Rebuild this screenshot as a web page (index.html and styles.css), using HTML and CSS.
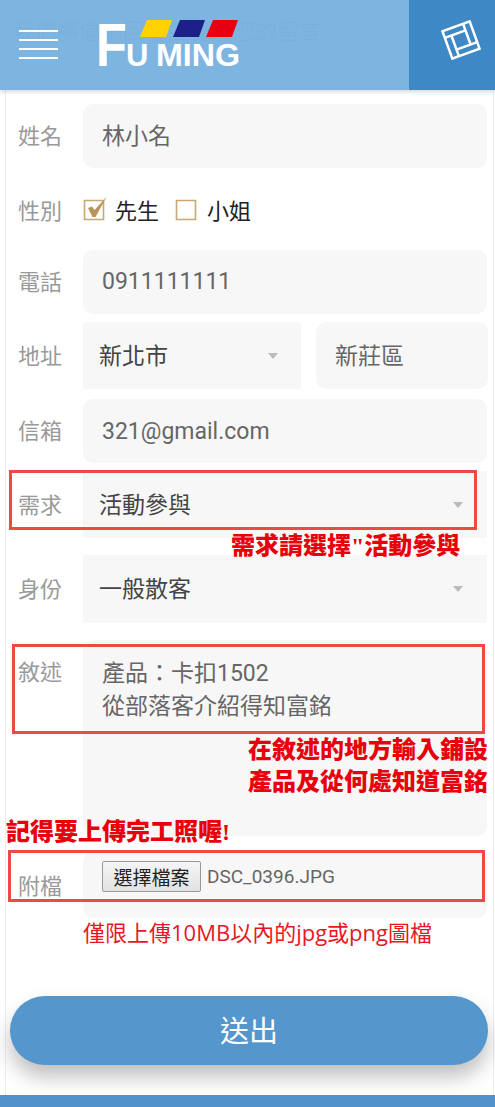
FILE: index.html
```html
<!DOCTYPE html>
<html lang="zh-Hant">
<head>
    <meta charset="UTF-8">
    <meta name="viewport" content="width=device-width, initial-scale=1.0">
    <title>聯絡我們</title>
    <link rel="stylesheet" href="styles.css">
</head>
<body>
    <header class="top-bar">
        <button class="menu-btn" type="button" aria-label="選單">
            <span></span><span></span><span></span><span></span>
        </button>
        <svg class="logo" width="160" height="50" viewBox="0 0 160 50">
            <text x="6" y="47" class="logo-f" textLength="31" lengthAdjust="spacingAndGlyphs">F</text>
            <text x="36" y="47" class="logo-u">U</text>
            <text x="66" y="47" class="logo-ming" textLength="84" lengthAdjust="spacingAndGlyphs">MING</text>
            <polygon points="57,1 82,1 76,18 50,18" fill="#ffd200"/>
            <polygon points="90,1 115,1 109,18 83,18" fill="#1c2088"/>
            <polygon points="123,1 148,1 142,18 116,18" fill="#e60012"/>
        </svg>
        <a class="side-btn" href="#" aria-label="產品">
            <svg width="40" height="40" viewBox="0 0 40 40" fill="none" stroke="#fff" stroke-width="2.5">
                <g transform="rotate(-20 20 20)">
                    <rect x="5.5" y="5.5" width="29" height="29"/>
                    <path d="M5.5 12.5H27.5M27.5 5.5V27.5M34.5 27.5H12.5M12.5 34.5V12.5"/>
                </g>
            </svg>
        </a>
    </header>

    <main class="page">
        <p class="intro">我們將儘快回覆並處理您的留言。</p>

        <form class="contact-form">
            <div class="row row-name">
                <label>姓名</label>
                <input class="field cjk" type="text" value="林小名">
            </div>
            <div class="row row-gender">
                <label>性別</label>
                <span class="check on">
                    <svg width="24" height="24" viewBox="0 0 24 24"><path d="M1.5 3.5H20.5V22.5H1.5Z" fill="none" stroke="#c9a873" stroke-width="1.6"/><path d="M5 11L9 9.5L11.5 13L23.5 0L12.5 20H9.5Z" fill="#b8965a"/></svg>
                    先生
                </span>
                <span class="check">
                    <svg width="24" height="24" viewBox="0 0 24 24"><path d="M1.5 3.5H20.5V22.5H1.5Z" fill="none" stroke="#c9a873" stroke-width="1.6"/></svg>
                    小姐
                </span>
            </div>
            <div class="row row-phone">
                <label>電話</label>
                <input class="field" type="text" value="0911111111">
            </div>
            <div class="row row-address">
                <label>地址</label>
                <div class="select city">新北市<i class="caret"></i></div>
                <input class="field area cjk" type="text" value="新莊區">
            </div>
            <div class="row row-mail">
                <label>信箱</label>
                <input class="field" type="text" value="321@gmail.com">
            </div>
            <div class="row row-need">
                <label>需求</label>
                <div class="select">活動參與<i class="caret"></i></div>
            </div>
            <div class="row row-role">
                <label>身份</label>
                <div class="select">一般散客<i class="caret"></i></div>
            </div>
            <div class="row row-text">
                <label>敘述</label>
                <div class="field area-text">產品：卡扣1502<br>從部落客介紹得知富銘</div>
            </div>
            <div class="row row-file">
                <label>附檔</label>
                <div class="field file-box">
                    <button class="file-btn" type="button">選擇檔案</button>
                    <span class="file-name">DSC_0396.JPG</span>
                </div>
            </div>
            <p class="file-note">僅限上傳10MB以內的jpg或png圖檔</p>
            <button class="send-btn" type="button">送出</button>
        </form>
    </main>

    <footer class="bottom-bar"></footer>

    <!-- 標註 -->
    <div class="mark mark-need"></div>
    <div class="mark mark-text"></div>
    <div class="mark mark-file"></div>
    <p class="tip tip-need">需求請選擇"活動參與</p>
    <p class="tip tip-text">在敘述的地方輸入鋪設<br>產品及從何處知道富銘</p>
    <p class="tip tip-file">記得要上傳完工照喔!</p>
</body>
</html>
```

FILE: styles.css
```css
* {
    box-sizing: border-box;
}
html, body {
    margin: 0;
    height: 1107px;
    overflow: hidden;
}
body {
    position: relative;
    background-color: #fff;
    font-family: "Roboto", "Noto Sans CJK TC", sans-serif;
    color: #666;
}

/* 上方選單 */
.top-bar {
    position: absolute;
    top: 0;
    left: 0;
    width: 495px;
    height: 90px;
    background-color: rgba(123, 179, 223, 0.975);
    box-shadow: 0 2px 4px rgba(0, 0, 0, 0.15);
    z-index: 5;
}
.menu-btn {
    position: absolute;
    left: 19px;
    top: 30px;
    width: 39px;
    height: 29px;
    padding: 0;
    border: none;
    background: none;
    display: flex;
    flex-direction: column;
    justify-content: space-between;
}
.menu-btn span {
    display: block;
    height: 2px;
    background-color: #fff;
}
.logo {
    position: absolute;
    left: 90px;
    top: 19px;
    overflow: visible;
}
.logo text {
    fill: #fff;
    font-family: "Liberation Sans", sans-serif;
    font-weight: 700;
}
.logo-f {
    font-size: 62px;
}
.logo-u {
    font-size: 31px;
    font-weight: 400;
}
.logo-ming {
    font-size: 31px;
}
.side-btn {
    position: absolute;
    right: 0;
    top: 0;
    width: 86px;
    height: 90px;
    padding: 0 0 10px 18px;
    background-color: #3e88c6;
    display: flex;
    align-items: center;
    justify-content: center;
}

/* 內容 */
.page {
    width: 489px;
    height: 1095px;
    margin-left: 5px;
    border-left: 1px solid #eee;
    border-right: 1px solid #eee;
    padding: 20px 0 0 0;
}
.intro {
    margin: 0 0 0 7px;
    height: 24px;
    font-size: 22px;
    line-height: 24px;
    white-space: nowrap;
    color: #666;
}
.contact-form {
    padding: 60px 6px 0 12px;
}
.row {
    display: flex;
    align-items: center;
}
.row label {
    width: 65px;
    flex: none;
    padding-bottom: 4px;
    font-size: 22px;
    color: #999;
}
.field, .select {
    flex: 1;
    min-width: 0;
    border: none;
    border-radius: 10px;
    background-color: #f7f7f7;
    font-family: inherit;
    font-size: 23px;
    color: #666;
    padding: 0 19px;
    outline: none;
}
.field.cjk {
    padding-bottom: 4px;
}
.select {
    position: relative;
    display: flex;
    align-items: center;
    border-radius: 2px;
    padding: 0 16px 4px;
    color: #444;
}
.caret {
    position: absolute;
    right: 24px;
    top: 50%;
    margin-top: -3px;
    border-left: 5px solid transparent;
    border-right: 5px solid transparent;
    border-top: 6px solid #bbb;
}
.row-name { height: 64px; }
.row-name .field, .row-phone .field, .row-mail .field { height: 64px; }
.row-gender { height: 81px; }
.row-gender label { padding-bottom: 0; }
.check {
    display: flex;
    align-items: center;
    gap: 8px;
    font-size: 22px;
    color: #222;
    margin-right: 16px;
}
.row-phone { height: 65px; }
.row-address { height: 67px; margin-top: 8px; gap: 0; }
.row-address .select { flex: none; width: 218px; height: 67px; }
.row-address .caret { right: 23px; }
.field.area {
    flex: none;
    width: 172px;
    height: 67px;
    margin-left: 15px;
    padding: 0 19px 4px;
}
.row-mail { height: 64px; margin-top: 10px; }
.row-need { height: 67px; margin-top: 8px; }
.row-need .select { height: 67px; }
.row-role { height: 68px; margin-top: 17px; }
.row-role .select { height: 68px; }
.row-text { height: 196px; margin-top: 17px; align-items: flex-start; }
.row-text label { padding-top: 14px; }
.area-text {
    height: 196px;
    padding: 17px 19px;
    line-height: 33px;
}
.row-file { height: 66px; margin-top: 16px; }
.row-file label { padding: 0 0 2px; }
.file-box {
    height: 66px;
    display: flex;
    align-items: flex-start;
    padding: 9px 19px;
}
.file-btn {
    width: 99px;
    height: 31px;
    padding: 0;
    border: 1px solid #999;
    border-radius: 2px;
    background: linear-gradient(#f5f5f5, #e2e2e2);
    font-family: inherit;
    font-size: 19px;
    color: #222;
}
.file-name {
    margin-left: 6px;
    font-size: 19px;
    line-height: 31px;
    color: #666;
}
.file-note {
    margin: 0 0 0 65px;
    height: 78px;
    font-family: "Open Sans", "Noto Sans CJK TC", sans-serif;
    font-size: 22px;
    line-height: 28px;
    white-space: nowrap;
    color: #e8171f;
}
.send-btn {
    display: block;
    width: 478px;
    height: 69px;
    margin-left: -8px;
    padding: 0 0 4px;
    border: none;
    border-radius: 35px;
    background-color: #5596cd;
    box-shadow: 0 12px 20px rgba(0, 0, 0, 0.25);
    font-family: inherit;
    font-size: 29px;
    color: #fff;
}
.bottom-bar {
    height: 12px;
    background-color: #4f92cb;
}

/* 標註 */
.mark {
    position: absolute;
    border: 3px solid #ec4a45;
    z-index: 3;
}
.mark-need { left: 9px; top: 470px; width: 468px; height: 60px; }
.mark-text { left: 12px; top: 644px; width: 473px; height: 90px; }
.mark-file { left: 8px; top: 850px; width: 477px; height: 52px; }
.tip {
    position: absolute;
    margin: 0;
    z-index: 4;
    color: #e8000b;
    font-family: "Liberation Serif", "Noto Sans CJK TC", serif;
    font-weight: 900;
    font-size: 24px;
    line-height: 32px;
    white-space: nowrap;
}
.tip-need { left: 231px; top: 530px; }
.tip-text { left: 248px; top: 734px; }
.tip-file { left: 6px; top: 816px; }
```
